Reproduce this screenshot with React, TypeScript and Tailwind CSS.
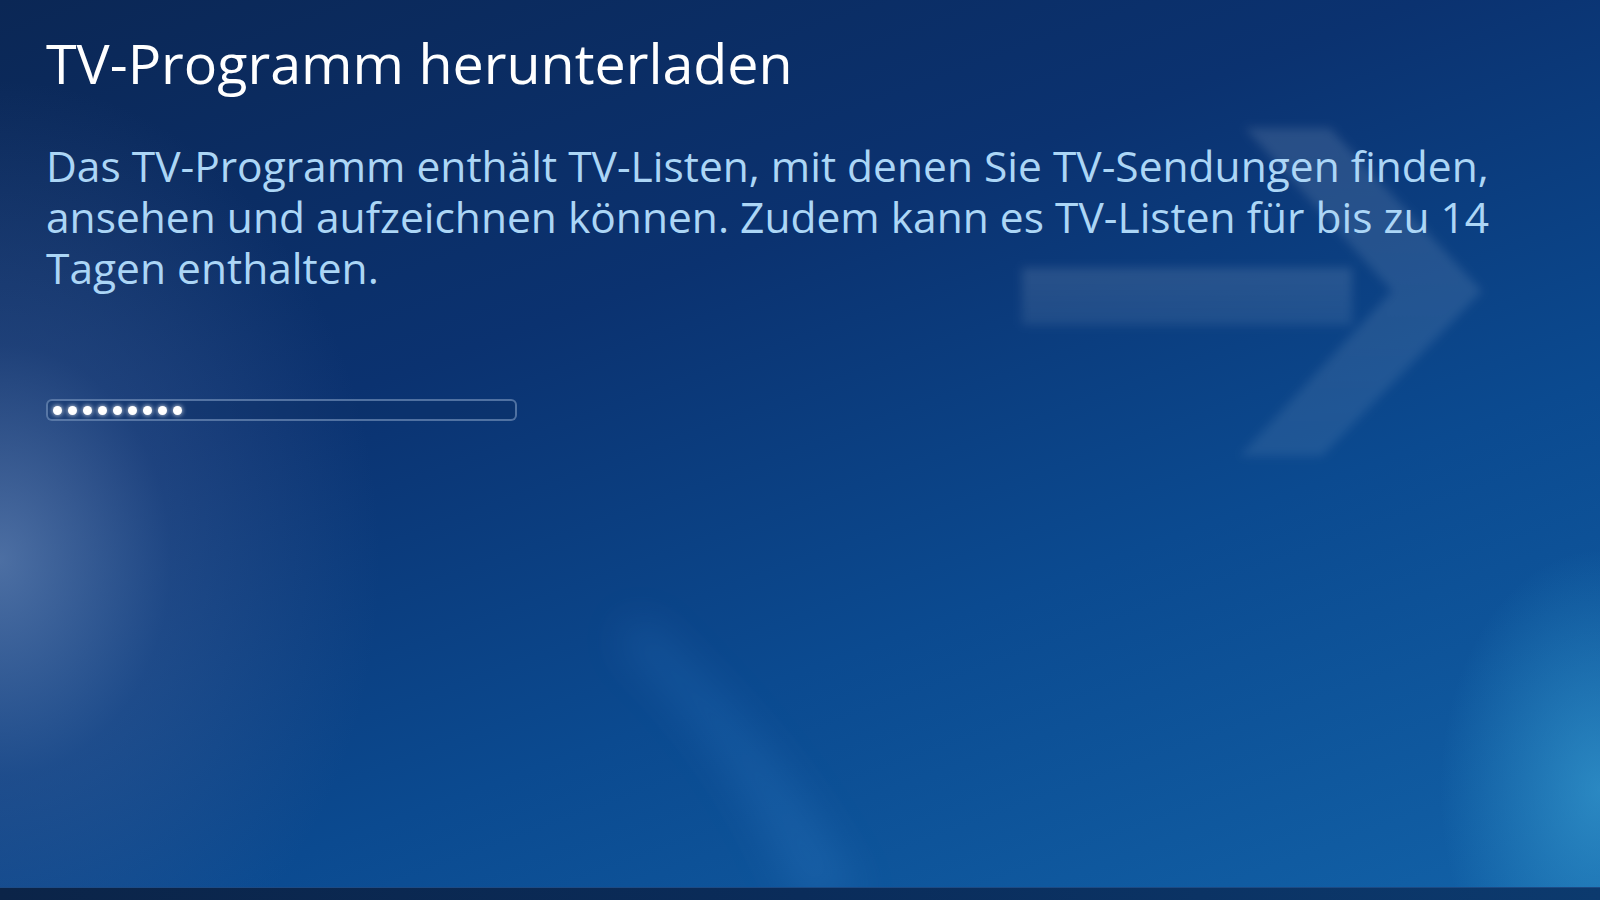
export default function App() {
  const dots = Array.from({ length: 9 });

  return (
    <div className="relative w-[1600px] h-[900px] overflow-hidden bg-[linear-gradient(160deg,#0b2755_0%,#0b3270_35%,#0b4a90_65%,#1262a8_100%)] font-['Open_Sans','Noto_Sans',sans-serif]">
      {/* background glows and arrow */}
      <div className="absolute inset-0 bg-[radial-gradient(ellipse_380px_480px_at_0px_560px,rgba(120,150,195,0.6),rgba(80,110,165,0.28)_45%,transparent_100%)]" />
      <div className="absolute inset-0 bg-[radial-gradient(ellipse_160px_240px_at_1600px_790px,rgba(60,165,215,0.6),transparent_100%)]" />
      <svg className="absolute inset-0" width="1600" height="900" viewBox="0 0 1600 900">
        <defs>
          <filter id="soft" x="-20%" y="-20%" width="140%" height="140%">
            <feGaussianBlur stdDeviation="5" />
          </filter>
          <filter id="streak" x="-50%" y="-50%" width="200%" height="200%">
            <feGaussianBlur stdDeviation="22" />
          </filter>
          <linearGradient id="arrowFill" x1="0" y1="0" x2="0" y2="1">
            <stop offset="0" stopColor="#ffffff" stopOpacity="0.12" />
            <stop offset="1" stopColor="#ffffff" stopOpacity="0.08" />
          </linearGradient>
        </defs>
        <path
          d="M640 620 C 720 700, 800 780, 860 900 L 800 900 C 760 800, 700 710, 620 640 Z"
          fill="#3a86d0"
          opacity="0.25"
          filter="url(#streak)"
        />
        <g filter="url(#soft)" fill="url(#arrowFill)">
          <rect x="1022" y="268" width="330" height="57" />
          <polygon points="1245,128 1330,128 1482,291 1322,456 1240,456 1392,291" />
        </g>
      </svg>

      <div className="relative flex flex-col pl-[46px] pt-[31px]">
        <h1 className="text-[55.6px] leading-[64px] font-medium text-white">
          TV-Programm herunterladen
        </h1>
        <p className="mt-[45px] text-[42.5px] leading-[51px] font-medium text-[#acd6f6]">
          <span className="block">Das TV-Programm enthält TV-Listen, mit denen Sie TV-Sendungen finden,</span>
          <span className="block">ansehen und aufzeichnen können. Zudem kann es TV-Listen für bis zu 14</span>
          <span className="block">Tagen enthalten.</span>
        </p>

        <div className="mt-[106px] flex items-center gap-[6px] w-[471px] h-[22px] px-[5px] rounded-[6px] border-2 border-[#7f9cc4]/60 bg-[#0d2f64]/40">
          {dots.map((_, i) => (
            <span key={i} className="w-[9px] h-[9px] rounded-full bg-white shadow-[0_0_5px_rgba(255,255,255,0.9)]" />
          ))}
        </div>
      </div>

      <div className="absolute left-0 bottom-0 w-full h-[13px] bg-[linear-gradient(90deg,#0b2448,#0a2c5a_50%,#0c3a6e)] border-t border-[#1d4a84]" />
    </div>
  );
}
